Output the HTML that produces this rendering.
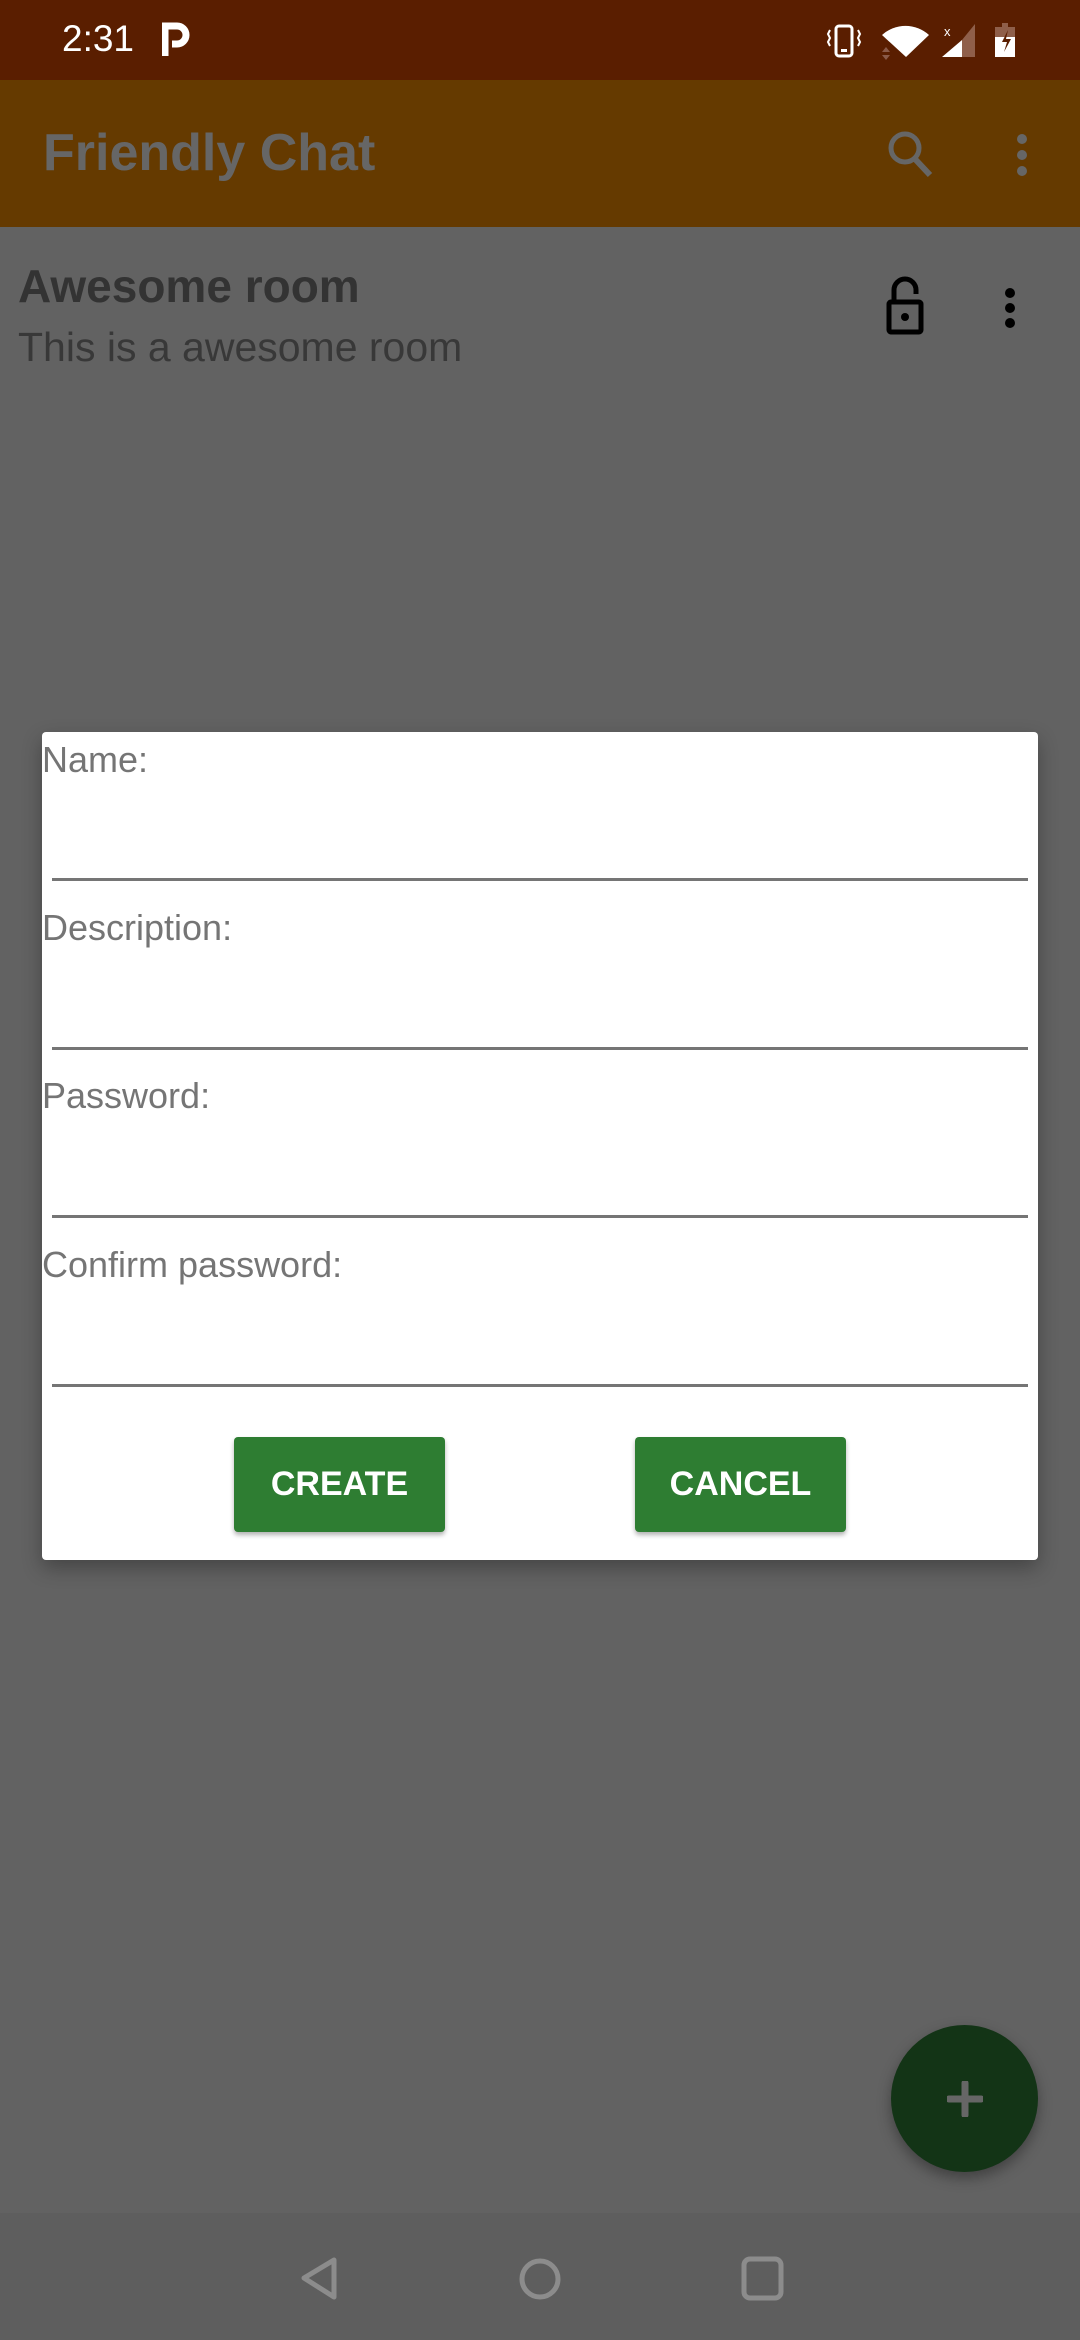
<!DOCTYPE html>
<html><head><meta charset="utf-8"><style>
*{margin:0;padding:0;box-sizing:border-box}
body{width:1080px;height:2340px;position:relative;background:#626262;font-family:"Liberation Sans",sans-serif;overflow:hidden}
.abs{position:absolute}
.lbl{position:absolute;left:42px;font-size:36px;color:#757575;line-height:40px}
.line{position:absolute;left:52px;width:976px;height:3px;background:#757575}
.btn{position:absolute;top:1437px;width:211px;height:95px;background:#2e7d32;border-radius:4px;color:#fff;font-weight:bold;font-size:34px;display:flex;align-items:center;justify-content:center;box-shadow:0 3px 5px rgba(0,0,0,.3)}
</style></head><body>
<div class="abs" style="left:0;top:0;width:1080px;height:80px;background:#5a1e00"></div>
<div class="abs" style="left:62px;top:17px;font-size:37px;color:#fff;line-height:44px">2:31</div>
<div class="abs" style="left:162px;top:22px;width:28px;height:36px;">
<svg width="28" height="36" viewBox="0 0 28 36"><path d="M3 34V4h12a9 9 0 0 1 0 18H10" stroke="#fff" stroke-width="7" fill="none"/></svg></div>
<svg class="abs" style="left:820px;top:18px" width="210" height="45" viewBox="820 18 210 45">
<rect x="836" y="26" width="16" height="30" rx="3" fill="none" stroke="#fff" stroke-width="3"/>
<rect x="841" y="49" width="6" height="3" fill="#fff"/>
<path d="M830 30l-2 4 2 4-2 4 2 4M858 30l2 4-2 4 2 4-2 4" stroke="#fff" stroke-width="2" fill="none"/>
<path d="M882 35a35 35 0 0 1 47 0L906 57z" fill="#fff"/>
<path d="M882 52l4-5 4 5zM882 55l4 5 4-5z" fill="#8a5a48"/>
<path d="M942 57L962 40V57z" fill="#fff"/><path d="M962 40L975 24V57H962z" fill="#8f5f4a"/>
<text x="944" y="36" font-size="13" fill="#fff" font-family="Liberation Sans">x</text>
<rect x="1002" y="23" width="6" height="4" fill="#8f5f4a"/><rect x="995" y="27" width="20" height="10" fill="#8f5f4a"/>
<rect x="995" y="37" width="20" height="20" fill="#fff"/>
<path d="M1008 30l-6 12h5l-3 10 7-13h-5z" fill="#5a1e00"/>
</svg>
<div class="abs" style="left:0;top:80px;width:1080px;height:147px;background:#653a00"></div>
<div class="abs" style="left:43px;top:122px;font-size:52px;font-weight:bold;color:#666;line-height:62px">Friendly Chat</div>
<svg class="abs" style="left:884px;top:128px" width="56" height="52" viewBox="0 0 56 52"><circle cx="21" cy="20" r="14" stroke="#666" stroke-width="5" fill="none"/><path d="M31 31l15 16" stroke="#666" stroke-width="6"/></svg>
<svg class="abs" style="left:1010px;top:130px" width="24" height="50"><circle cx="12" cy="9" r="5" fill="#666"/><circle cx="12" cy="25" r="5" fill="#666"/><circle cx="12" cy="41" r="5" fill="#666"/></svg>
<div class="abs" style="left:18px;top:259px;font-size:46px;font-weight:bold;color:#333;line-height:54px">Awesome room</div>
<div class="abs" style="left:18px;top:323px;font-size:41px;color:#383838;line-height:48px">This is a awesome room</div>
<svg class="abs" style="left:880px;top:276px" width="50" height="62" viewBox="0 0 50 62"><path d="M14 26V14a11 11 0 0 1 22 0v4" stroke="#000" stroke-width="5" fill="none"/><rect x="9" y="26" width="32" height="30" rx="2" stroke="#000" stroke-width="5" fill="none"/><circle cx="25" cy="41" r="4" fill="#000"/></svg>
<svg class="abs" style="left:998px;top:284px" width="24" height="50"><circle cx="12" cy="9" r="5" fill="#000"/><circle cx="12" cy="24" r="5" fill="#000"/><circle cx="12" cy="39" r="5" fill="#000"/></svg>
<div class="abs" style="left:42px;top:732px;width:996px;height:828px;background:#fff;border-radius:4px;box-shadow:0 8px 20px rgba(0,0,0,.3)"></div>
<div class="lbl" style="top:740px">Name:</div>
<div class="line" style="top:878px"></div>
<div class="lbl" style="top:908px">Description:</div>
<div class="line" style="top:1047px"></div>
<div class="lbl" style="top:1076px">Password:</div>
<div class="line" style="top:1215px"></div>
<div class="lbl" style="top:1245px">Confirm password:</div>
<div class="line" style="top:1384px"></div>
<div class="btn" style="left:234px">CREATE</div>
<div class="btn" style="left:635px">CANCEL</div>
<div class="abs" style="left:891px;top:2025px;width:147px;height:147px;border-radius:50%;background:#133416;box-shadow:0 6px 14px rgba(0,0,0,.35)"></div>
<svg class="abs" style="left:947px;top:2081px" width="36" height="36"><path d="M18 2v32M2 18h32" stroke="#666" stroke-width="7" stroke-linecap="round"/></svg>
<div class="abs" style="left:0;top:2213px;width:1080px;height:127px;background:#5e5e5e"></div>
<svg class="abs" style="left:0;top:2213px" width="1080" height="127" viewBox="0 2213 1080 127">
<path d="M334 2260L304 2278 334 2297z" stroke="#8c8c8c" stroke-width="5" fill="none" stroke-linejoin="round"/>
<circle cx="540" cy="2279" r="18" stroke="#8c8c8c" stroke-width="5" fill="none"/>
<rect x="744" y="2259" width="37" height="39" rx="6" stroke="#8c8c8c" stroke-width="5" fill="none"/>
</svg>
</body></html>
